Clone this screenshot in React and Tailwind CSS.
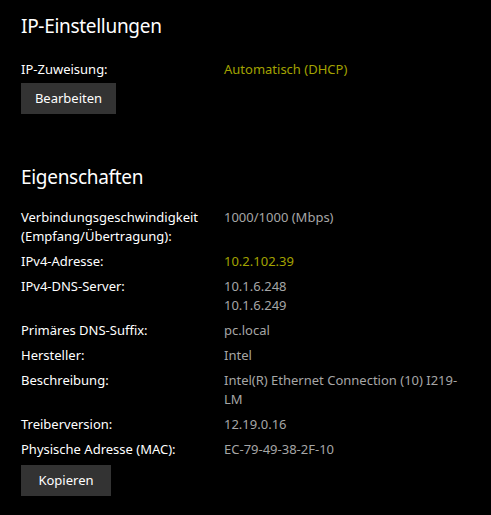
import React from 'react';

const rows = [
  { label: ['Verbindungsgeschwindigkeit', '(Empfang/Übertragung):'], value: ['1000/1000 (Mbps)'] },
  { label: ['IPv4-Adresse:'], value: ['10.2.102.39'], accent: true },
  { label: ['IPv4-DNS-Server:'], value: ['10.1.6.248', '10.1.6.249'] },
  { label: ['Primäres DNS-Suffix:'], value: ['pc.local'] },
  { label: ['Hersteller:'], value: ['Intel'] },
  { label: ['Beschreibung:'], value: ['Intel(R) Ethernet Connection (10) I219-', 'LM'] },
  { label: ['Treiberversion:'], value: ['12.19.0.16'] },
  { label: ['Physische Adresse (MAC):'], value: ['EC-79-49-38-2F-10'] },
];

const Lines = ({ lines }) => (
  <>
    {lines.map((l, i) => (
      <div key={i}>{l}</div>
    ))}
  </>
);

const Button = ({ children, className = '' }) => (
  <button className={`h-[31px] bg-[#333333] text-white text-[13px] leading-none text-center ${className}`}>
    {children}
  </button>
);

export default function App() {
  return (
    <div
      className="w-[491px] h-[515px] bg-black text-white pl-[21px] pt-[12px] overflow-hidden"
      style={{ fontFamily: '"Noto Sans", "Open Sans", sans-serif' }}
    >
      <h1 className="text-[19px] leading-[28px] tracking-[-0.3px] font-normal">IP-Einstellungen</h1>

      <div className="mt-[20px] grid grid-cols-[203px_1fr] text-[13px] leading-[19px]">
        <div>IP-Zuweisung:</div>
        <div className="text-[#a3a300]">Automatisch (DHCP)</div>
      </div>
      <div className="mt-[4px]">
        <Button className="w-[95px]">Bearbeiten</Button>
      </div>

      <h2 className="mt-[49px] text-[19px] leading-[28px] tracking-[-0.3px] font-normal">Eigenschaften</h2>

      <div className="mt-[17px] flex flex-col gap-[6px] text-[13px] leading-[19px]">
        {rows.map((r, i) => (
          <div key={i} className="grid grid-cols-[203px_1fr]">
            <div>
              <Lines lines={r.label} />
            </div>
            <div className={r.accent ? 'text-[#a3a300]' : 'text-[#a6a6a6]'}>
              <Lines lines={r.value} />
            </div>
          </div>
        ))}
      </div>
      <div className="mt-[6px]">
        <Button className="w-[90px]">Kopieren</Button>
      </div>
    </div>
  );
}
